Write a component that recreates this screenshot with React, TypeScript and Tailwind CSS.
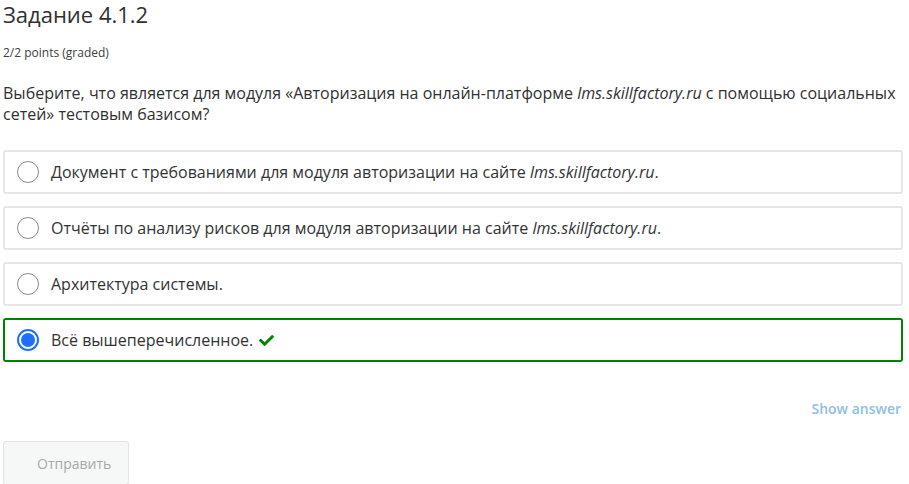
import React from "react";
import { FaCheck } from "react-icons/fa";

const options = [
  { text: "Документ с требованиями для модуля авторизации на сайте ", site: "lms.skillfactory.ru", tail: "." },
  { text: "Отчёты по анализу рисков для модуля авторизации на сайте ", site: "lms.skillfactory.ru", tail: "." },
  { text: "Архитектура системы.", site: "", tail: "" },
];

const App = () => {
  return (
    <div className="bg-white w-[909px] h-[484px] overflow-hidden font-['Open_Sans',sans-serif] text-[#313131]">
      <div className="w-[900px] ml-[3px]">
        <h2 className="text-[22px] leading-[28px] font-normal text-[#313131]">Задание 4.1.2</h2>
        <div className="mt-[17px] text-[12px] leading-[16px] text-[#414141]">2/2 points (graded)</div>
        <p className="mt-[22px] text-[16px] leading-[21px] text-[#313131]">
          Выберите, что является для модуля «Авторизация на онлайн-платформе <i>lms.skillfactory.ru</i> с помощью
          социальных сетей» тестовым базисом?
        </p>
        <div className="mt-[25px] flex flex-col gap-[12px]">
          {options.map((o) => (
            <div
              key={o.text}
              className="flex items-center h-[44px] border-2 border-[#e6e6e6] rounded-[3px] pl-[12px]"
            >
              <span className="w-[22px] h-[22px] rounded-full border border-[#8a8a8a] bg-white"></span>
              <span className="ml-[12px] text-[16px] text-[#333]">
                {o.text}
                {o.site && <i>{o.site}</i>}
                {o.tail}
              </span>
            </div>
          ))}
          <div className="flex items-center h-[44px] border-2 border-[#008100] rounded-[3px] pl-[12px]">
            <span className="w-[22px] h-[22px] rounded-full border-2 border-[#1f6fff] flex items-center justify-center">
              <span className="w-[14px] h-[14px] rounded-full bg-[#1f6fff]"></span>
            </span>
            <span className="ml-[12px] text-[16px] text-[#333]">Всё вышеперечисленное.</span>
            <FaCheck className="ml-[6px] text-[#008100] text-[15px]" />
          </div>
        </div>
        <div className="mt-[38px] mr-[2px] flex justify-end">
          <span className="text-[14px] leading-[18px] font-semibold text-[#8cc0e3]">Show answer</span>
        </div>
        <button className="mt-[23px] w-[126px] h-[44px] bg-[#f6f7f7] border border-[#e2e4e5] rounded-[3px] text-[14px] text-[#a8a8a8] text-left pl-[33px]">
          Отправить
        </button>
      </div>
    </div>
  );
};

export default App;
